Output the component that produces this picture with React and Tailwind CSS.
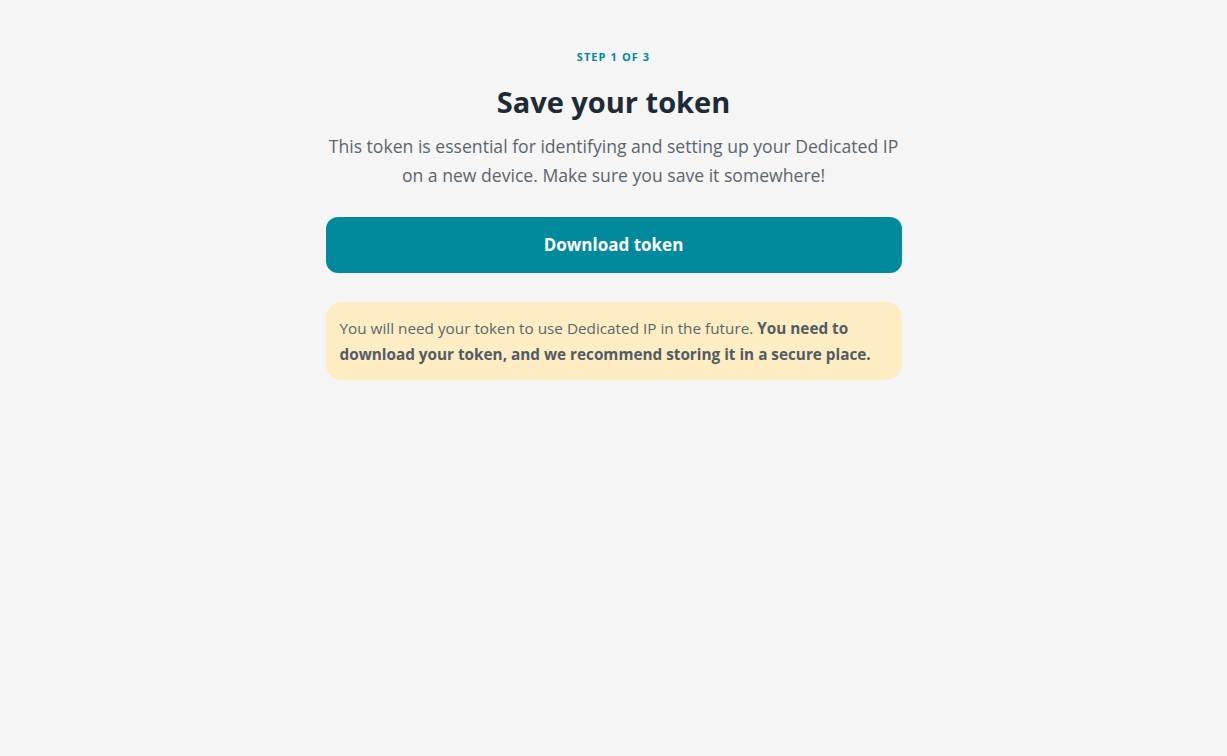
export default function App() {
  return (
    <div className="min-h-screen w-full bg-[#f4f5f4] font-['Open_Sans',sans-serif]">
      <div className="mx-auto flex w-[576px] flex-col items-center pt-[50px]">
        <span className="text-[11px] font-bold uppercase leading-[14px] tracking-[0.1em] text-[#00899b]">
          Step 1 of 3
        </span>
        <h1 className="mt-[19px] text-[29px] font-bold leading-[38px] text-[#1e2b36]">Save your token</h1>
        <p className="mt-[11px] text-center text-[17.6px] leading-[29px] text-[#5b6570]">
          This token is essential for identifying and setting up your Dedicated IP on a new device. Make sure you save it somewhere!
        </p>
        <button className="mt-[27px] flex h-[56px] w-full items-center justify-center rounded-[12px] bg-[#008a9b] text-[17px] font-bold text-white">
          Download token
        </button>
        <div className="mt-[29px] w-full rounded-[16px] bg-[#feedc2] px-[14px] py-[13px] text-[15.3px] leading-[26px] text-[#5b6570]">
          You will need your token to use Dedicated IP in the future.{' '}
          <strong className="font-bold text-[#525c66]">
            You need to download your token, and we recommend storing it in a secure place.
          </strong>
        </div>
      </div>
    </div>
  );
}
